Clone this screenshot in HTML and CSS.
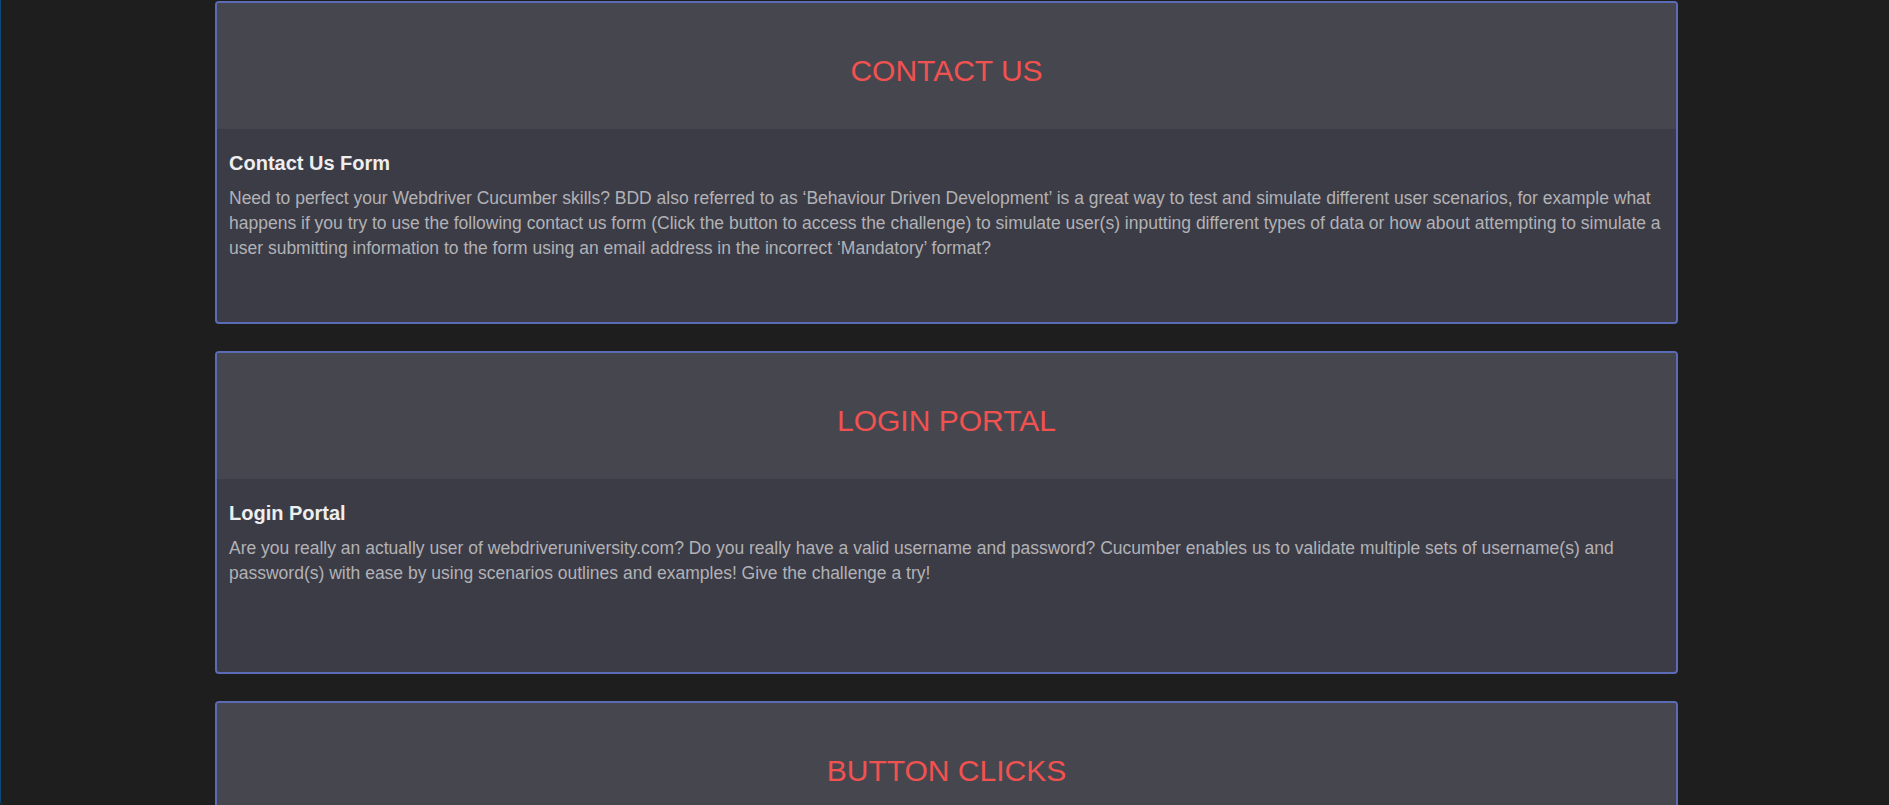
FILE: index.html
```html
<!DOCTYPE html>
<html lang="en">
<head>
<meta charset="utf-8">
<title>WebdriverUniversity</title>
<link rel="stylesheet" href="styles.css">
</head>
<body>
<div class="frame">
  <div class="container">
    <section class="card">
      <div class="card-header"><h2 class="card-title">CONTACT US</h2></div>
      <div class="card-body">
        <h4 class="section-heading">Contact Us Form</h4>
        <p class="section-text">Need to perfect your Webdriver Cucumber skills? BDD also referred to as ‘Behaviour Driven Development’ is a great way to test and simulate different user scenarios, for example what happens if you try to use the following contact us form (Click the button to access the challenge) to simulate user(s) inputting different types of data or how about attempting to simulate a user submitting information to the form using an email address in the incorrect ‘Mandatory’ format?</p>
      </div>
    </section>
    <section class="card">
      <div class="card-header"><h2 class="card-title">LOGIN PORTAL</h2></div>
      <div class="card-body">
        <h4 class="section-heading">Login Portal</h4>
        <p class="section-text">Are you really an actually user of webdriveruniversity.com? Do you really have a valid username and password? Cucumber enables us to validate multiple sets of username(s) and password(s) with ease by using scenarios outlines and examples! Give the challenge a try!</p>
      </div>
    </section>
    <section class="card">
      <div class="card-header"><h2 class="card-title">BUTTON CLICKS</h2></div>
      <div class="card-body">
        <h4 class="section-heading">Button Clicks</h4>
        <p class="section-text"></p>
      </div>
    </section>
  </div>
</div>
</body>
</html>
```

FILE: styles.css
```css
html, body {
  margin: 0;
  padding: 0;
  background: #1e1e1e;
}

body {
  font-family: "Liberation Sans", Arial, sans-serif;
}

.frame {
  height: 100vh;
  box-sizing: border-box;
  border-left: 1px solid #0d4679;
  border-bottom-left-radius: 4px;
  overflow: hidden;
  padding-left: 3px;
  padding-top: 1px;
}

.container {
  width: 1463px;
  margin: 0 auto;
  display: flex;
  flex-direction: column;
  gap: 27px;
}

.card {
  border: 2px solid #5c6bb6;
  border-radius: 4px;
  overflow: hidden;
  background: #3c3c46;
}

.card-header {
  background: #46464f;
  height: 126px;
  box-sizing: border-box;
  padding-top: 51px;
  text-align: center;
}

.card-title {
  margin: 0;
  font-size: 30px;
  line-height: 1.1;
  font-weight: normal;
  color: #f2524f;
}

.card-body {
  height: 193px;
  box-sizing: border-box;
  padding: 23px 8px 0 12px;
}

.section-heading {
  margin: 0 0 12px;
  font-size: 20px;
  line-height: 1.1;
  font-weight: bold;
  color: #eeeeee;
}

.section-text {
  margin: 0;
  font-size: 17.5px;
  line-height: 25px;
  color: #b2b2b6;
}
```
